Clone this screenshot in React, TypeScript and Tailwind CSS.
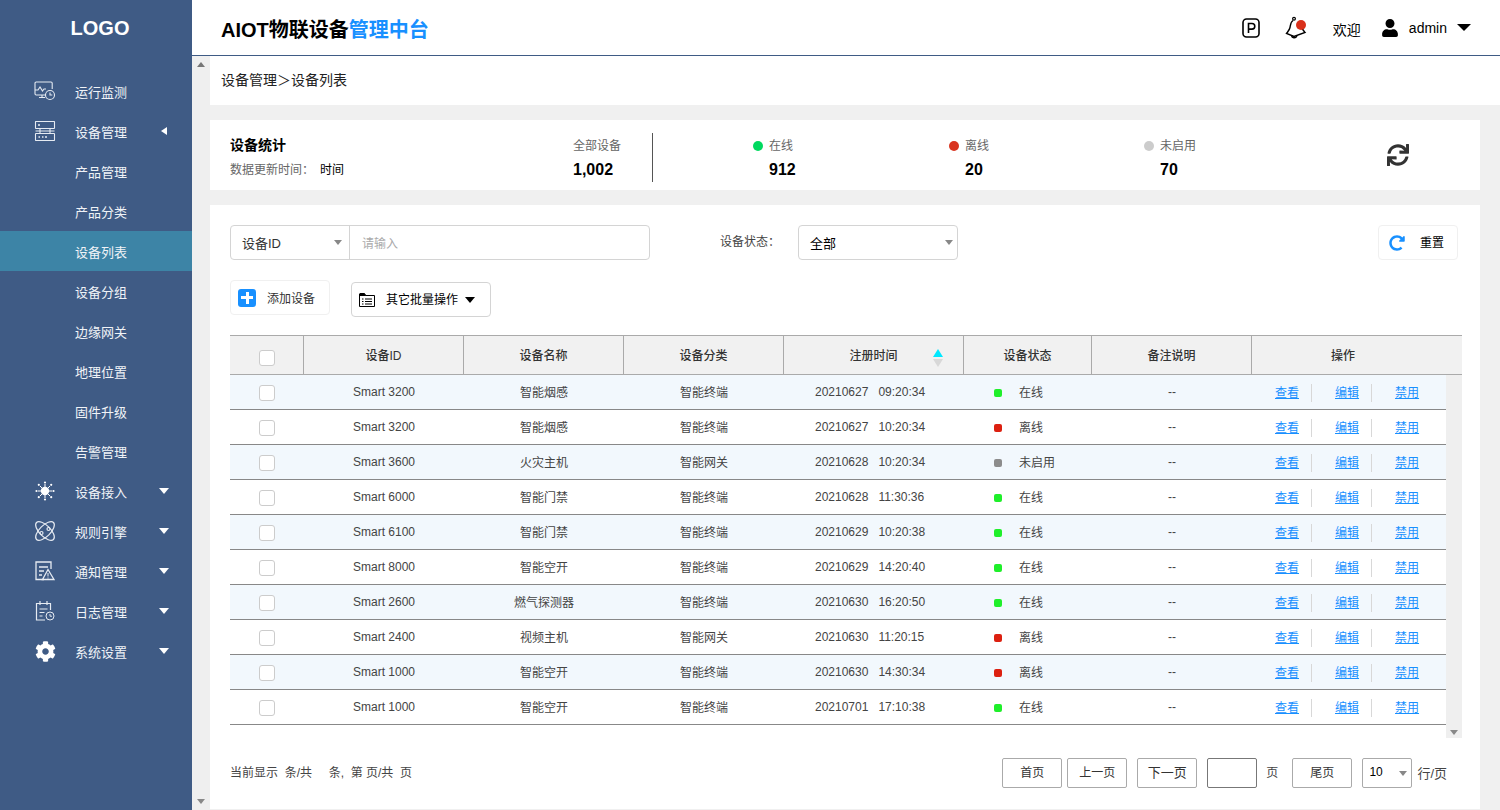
import React from 'react';
import { FaCog, FaSync, FaRedoAlt, FaUser } from 'react-icons/fa';

const font = { fontFamily: '"Liberation Sans", "Noto Sans CJK SC", sans-serif' };

const IconMonitor = () => (
  <svg width="22" height="20" viewBox="0 0 22 20" fill="none" stroke="#e6ebf2" strokeWidth="1.100">
    <path d="M12 14H2.200A1.200 1.200 0 0 1 1 12.800V2.200A1.200 1.200 0 0 1 2.200 1H17a1.200 1.200 0 0 1 1.200 1.200V8" />
    <path d="M1 9h3l2-3 2.500 4L10 8h2M5 16.500h6M8 14v2.500" />
    <circle cx="16" cy="14" r="4.500" fill="#3f5b85" />
    <path d="M16 11.500V14h2.300" />
  </svg>
);

const IconServer = () => (
  <svg width="22" height="20" viewBox="0 0 22 20" fill="none" stroke="#e6ebf2" strokeWidth="1.100">
    <rect x="1.500" y="0.500" width="19" height="7" rx="0.500" />
    <rect x="1.500" y="12.500" width="19" height="7" rx="0.500" />
    <path d="M6 7.500v5M16 7.500v5M1.500 10h19" />
    <path d="M4 4h2M4.500 16h1.500M8 16h1.500M11 16h2" strokeWidth="1.500" />
  </svg>
);

const IconBurst = () => (
  <svg width="20" height="20" viewBox="0 0 20 20" fill="#fff" stroke="#fff">
    <circle cx="10" cy="10" r="4.200" stroke="none" />
    <path d="M10 3v14M3 10h14M5 5l10 10M15 5 5 15" strokeWidth="1" />
    <circle cx="10" cy="1.500" r="1.100" stroke="none" />
    <circle cx="10" cy="18.500" r="1.100" stroke="none" />
    <circle cx="1.500" cy="10" r="1.100" stroke="none" />
    <circle cx="18.500" cy="10" r="1.100" stroke="none" />
    <circle cx="3.800" cy="3.800" r="1.100" stroke="none" />
    <circle cx="16.200" cy="3.800" r="1.100" stroke="none" />
    <circle cx="3.800" cy="16.200" r="1.100" stroke="none" />
    <circle cx="16.200" cy="16.200" r="1.100" stroke="none" />
  </svg>
);

const IconAtom = () => (
  <svg width="22" height="22" viewBox="0 0 22 22" fill="none" stroke="#e6ebf2" strokeWidth="1.200">
    <ellipse cx="11" cy="11" rx="12" ry="5.500" transform="rotate(45 11 11)" />
    <ellipse cx="11" cy="11" rx="12" ry="5.500" transform="rotate(-45 11 11)" />
    <circle cx="7.500" cy="13" r="1.500" />
    <circle cx="14.500" cy="9" r="1.500" />
  </svg>
);

const IconNotice = () => (
  <svg width="20" height="20" viewBox="0 0 20 20" fill="none" stroke="#e6ebf2" strokeWidth="1.300">
    <path d="M9 18.500H1V1h15v7" />
    <path d="M4 6h9M4 10h5M4 14h3" />
    <path d="M13 8.500 19 18.500H7.500Z" />
    <path d="M13 12v3.500M13 16.500v1" strokeWidth="1" />
  </svg>
);

const IconCalendar = () => (
  <svg width="20" height="22" viewBox="0 0 20 22" fill="none" stroke="#e6ebf2" strokeWidth="1.200">
    <path d="M10 20H1.500V3.500h14V10" />
    <path d="M5 1v4M12 1v4M4.500 9h8M4.500 12.500h5M4.500 16h3" />
    <circle cx="15" cy="16" r="4" fill="#3f5b85" strokeWidth="1" />
    <path d="M15 14v2.200h2" strokeWidth="1" />
  </svg>
);

const IconParking = () => (
  <svg width="18" height="20" viewBox="0 0 18 20" fill="none" stroke="#000">
    <rect x="1" y="1" width="16" height="18" rx="3.500" strokeWidth="1.600" />
    <path d="M6.500 15V5.500H10a2.800 2.800 0 0 1 0 5.600H6.500" strokeWidth="1.600" />
  </svg>
);

const IconBell = () => (
  <svg width="22" height="24" viewBox="0 0 22 24" fill="none" stroke="#000" strokeWidth="1.400">
    <path d="M8 4.500C5.500 6 5.500 9 5 11.500 4.500 14 3 15.500 1.500 17.500L9 20.500 20 16.500C18 14.500 17 12.500 16.500 10" />
    <circle cx="9" cy="2.800" r="1.400" strokeWidth="1.200" />
    <path d="M6.500 19.500c.5 2.500 4 3.500 5.500 .2" />
    <circle cx="16" cy="9" r="5" fill="#d9301a" stroke="none" />
  </svg>
);

const IconFolderList = () => (
  <svg width="16" height="14" viewBox="0 0 16 14" fill="none" stroke="#000" strokeWidth="1">
    <path d="M.500 1V13.500H15.500V2.500H6.500L5.500 .500H1Z" />
    <path d="M.500 1H5.500L6.500 2.500H.500Z" fill="#000" />
    <path d="M3 6h1.500M6 6h7M3 8.500h1.500M6 8.500h7M3 11h1.500M6 11h7" />
  </svg>
);

const TriUp = () => (
  <span className="block h-0 w-0 border-x-[4px] border-b-[5px] border-x-transparent border-b-[#777]" />
);

const TriDown = () => (
  <span className="block h-0 w-0 border-x-[4px] border-t-[5px] border-x-transparent border-t-[#888]" />
);

const menu = [
  { label: '运行监测', icon: <IconMonitor /> },
  { label: '设备管理', icon: <IconServer />, arrow: 'left' },
  { label: '产品管理' },
  { label: '产品分类' },
  { label: '设备列表', active: true },
  { label: '设备分组' },
  { label: '边缘网关' },
  { label: '地理位置' },
  { label: '固件升级' },
  { label: '告警管理' },
  { label: '设备接入', icon: <IconBurst />, arrow: 'down' },
  { label: '规则引擎', icon: <IconAtom />, arrow: 'down' },
  { label: '通知管理', icon: <IconNotice />, arrow: 'down' },
  { label: '日志管理', icon: <IconCalendar />, arrow: 'down' },
  { label: '系统设置', icon: <FaCog size={21} color="#fff" />, arrow: 'down' },
];

const stats = [
  { label: '在线', value: '912', color: 'bg-[#00d95f]', width: 'w-[196px]' },
  { label: '离线', value: '20', color: 'bg-[#d9341f]', width: 'w-[195px]' },
  { label: '未启用', value: '70', color: 'bg-[#cccccc]', width: 'w-[243px]' },
];

const columns = ['设备ID', '设备名称', '设备分类', '注册时间', '设备状态', '备注说明'];

const online = { text: '在线', dot: 'bg-[#1fef2a]' };
const offline = { text: '离线', dot: 'bg-[#dc2010]' };
const disabled = { text: '未启用', dot: 'bg-[#8c8c8c]' };

const rows = [
  { id: 'Smart 3200', name: '智能烟感', type: '智能终端', date: '20210627', time: '09:20:34', status: online },
  { id: 'Smart 3200', name: '智能烟感', type: '智能终端', date: '20210627', time: '10:20:34', status: offline },
  { id: 'Smart 3600', name: '火灾主机', type: '智能网关', date: '20210628', time: '10:20:34', status: disabled },
  { id: 'Smart 6000', name: '智能门禁', type: '智能终端', date: '20210628', time: '11:30:36', status: online },
  { id: 'Smart 6100', name: '智能门禁', type: '智能终端', date: '20210629', time: '10:20:38', status: online },
  { id: 'Smart 8000', name: '智能空开', type: '智能终端', date: '20210629', time: '14:20:40', status: online },
  { id: 'Smart 2600', name: '燃气探测器', type: '智能终端', date: '20210630', time: '16:20:50', status: online },
  { id: 'Smart 2400', name: '视频主机', type: '智能网关', date: '20210630', time: '11:20:15', status: offline },
  { id: 'Smart 1000', name: '智能空开', type: '智能终端', date: '20210630', time: '14:30:34', status: offline },
  { id: 'Smart 1000', name: '智能空开', type: '智能终端', date: '20210701', time: '17:10:38', status: online },
];

const Checkbox = () => (
  <span className="h-4 w-4 rounded-[3px] border border-[#cccccc] bg-white" />
);

const PageBtn = ({ children, className = 'w-[60px] text-xs' }: { children: React.ReactNode; className?: string }) => (
  <button className={`h-[30px] rounded-[2px] border border-[#aaaaaa] bg-white text-[#333] ${className}`}>
    {children}
  </button>
);

export default function App() {
  return (
    <div style={font} className="flex h-[810px] w-[1500px] overflow-hidden bg-[#f0f0f0] text-[#333]">
      {/* 左侧菜单 */}
      <aside className="w-[192px] shrink-0 bg-[#3f5b85] text-white">
        <div className="flex h-[71px] items-start justify-center pl-[8px] pt-[15px] text-xl font-bold leading-[26px]">LOGO</div>
        {menu.map((m) => (
          <div key={m.label} className={`relative flex h-10 items-center pl-[75px] pt-[3px] text-[13px] text-[#f0f3f7] ${m.active ? 'bg-[#3d84a6]' : ''}`}>
            {m.icon && <span className="absolute left-[34px] top-[9px] flex h-[22px] w-[22px] items-center justify-center">{m.icon}</span>}
            {m.label}
            {m.arrow === 'down' && <span className="absolute left-[159px] top-[17px] block h-0 w-0 border-x-[5px] border-t-[6px] border-x-transparent border-t-white" />}
            {m.arrow === 'left' && <span className="absolute left-[161px] top-[16px] h-0 w-0 border-y-[4px] border-r-[6px] border-y-transparent border-r-white" />}
          </div>
        ))}
      </aside>

      <div className="flex min-w-0 flex-1 flex-col">
        <header className="flex h-[56px] shrink-0 items-center border-b border-[#3f5b85] bg-white pl-[29px] pr-[29px]">
          <h1 className="mt-[4px] text-xl font-bold text-black">AIOT物联设备<span className="text-[#1890ff]">管理中台</span></h1>
          <div className="ml-auto flex items-center text-black">
            <IconParking />
            <span className="ml-[25px]"><IconBell /></span>
            <span className="ml-[26px] mt-[4px] text-sm">欢迎</span>
            <FaUser size={18} className="ml-[20px]" />
            <span className="ml-[10px] text-sm">admin</span>
            <span className="ml-[10px] block h-0 w-0 border-x-[7px] border-t-[7px] border-x-transparent border-t-black" />
          </div>
        </header>

        <div className="flex min-h-0 flex-1">
          {/* 页面滚动条 */}
          <div className="flex w-[18px] shrink-0 flex-col items-center justify-between bg-[#efefef] pb-[6px] pt-[6px]">
            <TriUp />
            <TriDown />
          </div>

          <main className="min-w-0 flex-1">
            <div className="flex h-[49px] items-center bg-white pb-[2px] pl-[11px] text-sm text-[#222]">设备管理＞设备列表</div>

            <div className="pr-5">
              {/* 设备统计 */}
              <section className="mt-[15px] flex h-[70px] items-center bg-white pl-5">
                <div className="w-[343px] pt-[3px]">
                  <div className="text-sm font-bold leading-5 text-black">设备统计</div>
                  <div className="mt-[7px] flex text-xs leading-4 text-[#666]">
                    <span className="w-[90px]">数据更新时间：</span>
                    <span className="text-black">时间</span>
                  </div>
                </div>
                <div className="w-[79px] pt-[6px]">
                  <div className="text-xs leading-5 text-[#666]">全部设备</div>
                  <div className="mt-1 text-base font-bold leading-5 text-black">1,002</div>
                </div>
                <div className="mr-[100px] mt-[5px] h-[49px] w-px bg-[#555]" />
                {stats.map((s) => (
                  <div key={s.label} className={`${s.width} pt-[6px]`}>
                    <div className="flex items-center text-xs leading-5 text-[#666]">
                      <span className={`mr-[6px] h-[10px] w-[10px] rounded-full ${s.color}`} />
                      {s.label}
                    </div>
                    <div className="mt-1 pl-4 text-base font-bold leading-5 text-black">{s.value}</div>
                  </div>
                ))}
                <FaSync size={22} className="text-[#333]" />
              </section>

              {/* 设备列表 */}
              <section className="mt-[15px] h-[604px] bg-white px-5 pt-5">
                <div className="flex h-[35px] items-stretch">
                  <div className="flex w-[420px] rounded border border-[#d4d4d4] text-[13px]">
                    <div className="flex w-[119px] items-center justify-between border-r border-[#d4d4d4] pl-[11px] pr-[7px]">
                      <span className="mt-[3px]">设备ID</span>
                      <TriDown />
                    </div>
                    <div className="flex items-center pl-3 pt-[2px] text-xs text-[#aaa]">请输入</div>
                  </div>
                  <div className="ml-[70px] flex w-[78px] items-center pb-[2px] text-xs text-[#444]">设备状态：</div>
                  <div className="flex w-[160px] items-center justify-between rounded border border-[#d4d4d4] pl-[11px] pr-[4px] text-[13px] text-black">
                    <span className="mt-[3px]">全部</span>
                    <TriDown />
                  </div>
                  <button className="ml-auto mr-[2px] flex w-[80px] items-center rounded border border-[#f0f0f0] pl-[10px] text-xs text-black">
                    <FaRedoAlt size={16} className="mr-[15px] text-[#1890ff]" />
                    重置
                  </button>
                </div>

                <div className="mt-5 flex h-[37px] items-start">
                  <button className="flex h-[35px] w-[100px] items-center rounded border border-[#f0f0f0] pl-[7px] text-xs text-[#333]">
                    <span className="relative mr-[11px] h-[18px] w-[18px] rounded-[3px] bg-[#1890ff]">
                      <span className="absolute left-[3px] top-[7.500px] h-[3px] w-3 bg-white" />
                      <span className="absolute left-[7.500px] top-[3px] h-3 w-[3px] bg-white" />
                    </span>
                    <span className="pt-[2px]">添加设备</span>
                  </button>
                  <button className="ml-[21px] mt-[2px] flex h-[35px] w-[140px] items-center rounded border border-[#d4d4d4] pl-[7px] text-xs text-black">
                    <IconFolderList />
                    <span className="ml-[11px]">其它批量操作</span>
                    <span className="ml-[7px] block h-0 w-0 border-x-[5px] border-t-[6px] border-x-transparent border-t-black" />
                  </button>
                </div>

                {/* 表格 */}
                <div className="mt-[18px] w-[1232px]">
                  <div className="grid h-10 grid-cols-[74px_160px_160px_160px_180px_128px_160px_210px] border-y border-[#aaaaaa] bg-[#f1f1f1] text-xs font-medium text-[#333]">
                    <div className="flex items-center justify-center border-r border-[#aaaaaa] pl-[1px] pt-[6px]"><Checkbox /></div>
                    {columns.map((c) => (
                      <div key={c} className="relative flex items-center justify-center border-r border-[#aaaaaa] pt-[2px]">
                        {c}
                        {c === '注册时间' && (
                          <span className="absolute left-[149px] top-[13px] flex flex-col gap-[2px]">
                            <span className="h-0 w-0 border-x-[5px] border-b-[8px] border-x-transparent border-b-[#00e8ff]" />
                            <span className="h-0 w-0 border-x-[5px] border-t-[8px] border-x-transparent border-t-[#d8d8d8]" />
                          </span>
                        )}
                      </div>
                    ))}
                    <div className="flex items-center justify-center pr-[28px] pt-[2px]">操作</div>
                  </div>

                  <div className="flex">
                    <div className="w-[1216px]">
                      {rows.map((r, i) => (
                        <div key={i} className={`grid h-[35px] grid-cols-[74px_160px_160px_160px_180px_128px_160px_194px] items-center border-b border-[#888] pt-[2px] text-xs text-[#444] ${i % 2 === 0 ? 'bg-[#f2f8fd]' : 'bg-white'}`}>
                          <div className="flex justify-center"><Checkbox /></div>
                          <div className="pb-[2px] text-center">{r.id}</div>
                          <div className="text-center">{r.name}</div>
                          <div className="text-center">{r.type}</div>
                          <div className="flex gap-[10px] pb-[2px] pl-[31px]"><span>{r.date}</span><span>{r.time}</span></div>
                          <div className="flex items-center pl-[30px]">
                            <span className={`mr-[17px] h-2 w-2 rounded-[2px] ${r.status.dot}`} />
                            {r.status.text}
                          </div>
                          <div className="pb-[2px] text-center">--</div>
                          <div className="flex items-center pl-[23px] text-[#1890ff]">
                            <a className="underline">查看</a>
                            <span className="mx-[12px] h-[18px] w-px bg-[#d8d8d8]" />
                            <a className="ml-[11px] underline">编辑</a>
                            <span className="mx-[12px] h-[18px] w-px bg-[#d8d8d8]" />
                            <a className="ml-[11px] underline">禁用</a>
                          </div>
                        </div>
                      ))}
                    </div>
                    {/* 表格滚动条 */}
                    <div className="flex h-[363px] w-4 flex-col items-center justify-end bg-[#efefef] pb-[3px]">
                      <TriDown />
                    </div>
                  </div>
                </div>

                {/* 分页 */}
                <div className="mt-[20px] flex h-[30px] w-[1217px] items-center text-xs text-[#444]">
                  <span className="whitespace-pre">当前显示  条/共     条,  第 页/共  页</span>
                  <div className="ml-auto flex items-center">
                    <PageBtn>首页</PageBtn>
                    <PageBtn className="ml-[5px] w-[60px] text-xs">上一页</PageBtn>
                    <PageBtn className="ml-[10px] w-[60px] text-[13px]">下一页</PageBtn>
                    <span className="ml-[10px] h-[30px] w-[50px] rounded-[2px] border border-[#777] bg-white" />
                    <span className="ml-[9px]">页</span>
                    <PageBtn className="ml-[14px] w-[60px] text-xs">尾页</PageBtn>
                    <div className="ml-[10px] flex h-[30px] w-[50px] items-center justify-between rounded-[2px] border border-[#aaaaaa] pl-[6px] pr-[4px] text-black">
                      <span className="pb-[2px]">10</span>
                      <TriDown />
                    </div>
                    <span className="ml-[5px] pt-[2px] text-[13px]">行/页</span>
                  </div>
                </div>
              </section>
            </div>
          </main>
        </div>
      </div>
    </div>
  );
}
